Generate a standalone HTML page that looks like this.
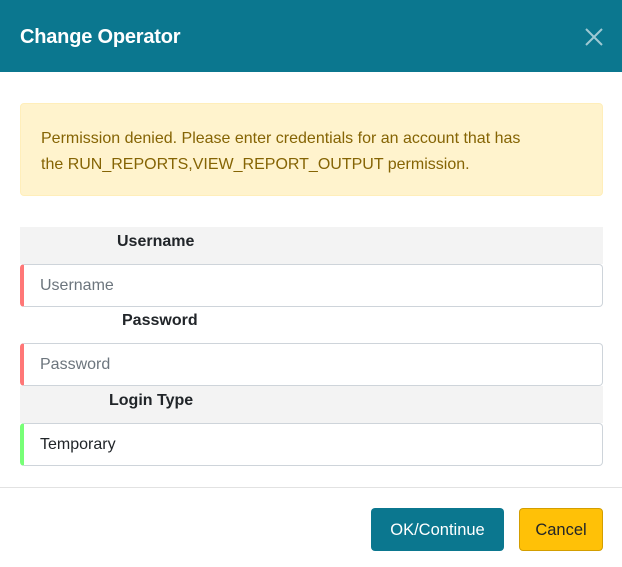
<!DOCTYPE html>
<html><head><style>
*{box-sizing:border-box;margin:0;padding:0}
body{width:622px;height:567px;background:#fff;font-family:"Liberation Sans",sans-serif;position:relative;overflow:hidden}
.hdr{position:absolute;left:0;top:0;width:622px;height:72px;background:#0b778f;color:#fff}
.hdr h1{position:absolute;left:20px;top:26px;font-size:20px;font-weight:bold;letter-spacing:-0.2px}
.alert{position:absolute;left:20px;top:103px;width:583px;height:93px;background:#fff3cd;border:1px solid #ffeeba;border-radius:4px;color:#856404;font-size:16px;line-height:26px;padding:22px 60px 22px 20px}
.row{position:absolute;left:20px;width:583px;height:37px}
.row b{position:absolute;top:6px;font-size:16px;color:#212529}
.inp{position:absolute;left:20px;width:583px;height:43px;border:1px solid #ced4da;border-left:4px solid #f77;border-radius:4px;background:#fff;font-size:16px;color:#6c757d;padding:12px 16px 0 16px}
.line{position:absolute;left:0;top:487px;width:622px;height:1px;background:#e2e2e2}
.btn{position:absolute;top:508px;height:43px;border-radius:4px;font-size:16.5px;text-align:center;line-height:44px}
</style></head><body>
<div class="hdr"><h1>Change Operator</h1>
<svg style="position:absolute;left:584px;top:27px" width="20" height="20" viewBox="0 0 20 20"><path d="M2 2L18 18M18 2L2 18" stroke="#9fc9d3" stroke-width="2"/></svg></div>
<div class="alert">Permission denied. Please enter credentials for an account that has the RUN_REPORTS,VIEW_REPORT_OUTPUT permission.</div>
<div class="row" style="top:227px;background:#f3f3f3"><b style="left:97px">Username</b></div>
<div class="inp" style="top:264px">Username</div>
<div class="row" style="top:306px"><b style="left:102px">Password</b></div>
<div class="inp" style="top:343px">Password</div>
<div class="row" style="top:386px;background:#f3f3f3"><b style="left:89px">Login Type</b></div>
<div class="inp" style="top:423px;border-left-color:#7f7;color:#212529">Temporary</div>
<div class="line"></div>
<div class="btn" style="left:371px;width:133px;background:#0b778f;color:#fff">OK/Continue</div>
<div class="btn" style="left:519px;width:84px;background:#ffc107;border:1px solid #d39e00;color:#212529;line-height:42px">Cancel</div>
</body></html>
